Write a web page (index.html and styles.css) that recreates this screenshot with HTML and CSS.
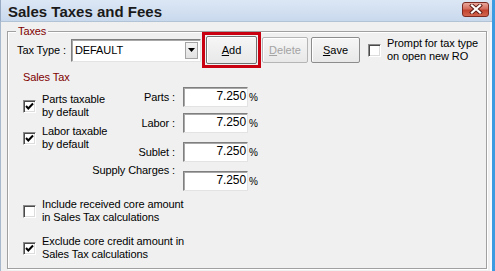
FILE: index.html
```html
<!DOCTYPE html>
<html lang="en">
<head>
    <meta charset="UTF-8">
    <title>Sales Taxes and Fees</title>
    <link rel="stylesheet" href="styles.css">
</head>
<body>
    <div class="window">
        <div class="titlebar">
            <span class="title">Sales Taxes and Fees</span>
            <span class="close-btn">
                <svg width="14" height="10" viewBox="0 0 14 10">
                    <path d="M3 1.5 L11 8.5 M11 1.5 L3 8.5" stroke="#5a1a14" stroke-width="4" stroke-linecap="square"/>
                    <path d="M3 1.5 L11 8.5 M11 1.5 L3 8.5" stroke="#fff" stroke-width="2.2" stroke-linecap="square"/>
                </svg>
            </span>
        </div>
        <div class="client">
            <div class="group">
                <span class="group-title">Taxes</span>

                <div class="toolbar">
                    <span class="field-label">Tax Type :</span>
                    <div class="combo">
                        <span class="combo-value">DEFAULT</span>
                        <span class="combo-arrow">
                            <svg width="7" height="4" viewBox="0 0 7 4"><path d="M0 0 H7 L3.5 4 Z" fill="#000"/></svg>
                        </span>
                    </div>
                    <div class="highlight">
                        <button class="btn btn-add"><u>A</u>dd</button>
                    </div>
                    <button class="btn btn-delete" disabled><u>D</u>elete</button>
                    <button class="btn btn-save"><u>S</u>ave</button>
                    <label class="check-item prompt">
                        <span class="check"></span>
                        <span>Prompt for tax type<br>on open new RO</span>
                    </label>
                </div>

                <div class="section-title">Sales Tax</div>

                <div class="sales">
                    <div class="flags">
                        <label class="check-item">
                            <span class="check checked">
                                <svg width="9" height="9" viewBox="0 0 9 9"><path d="M1 4 L3.3 6.5 L8 1.5" fill="none" stroke="#000" stroke-width="2"/></svg>
                            </span>
                            <span>Parts taxable<br>by default</span>
                        </label>
                        <label class="check-item">
                            <span class="check checked">
                                <svg width="9" height="9" viewBox="0 0 9 9"><path d="M1 4 L3.3 6.5 L8 1.5" fill="none" stroke="#000" stroke-width="2"/></svg>
                            </span>
                            <span>Labor taxable<br>by default</span>
                        </label>
                    </div>

                    <div class="rates">
                        <div class="rate">
                            <span class="rate-label">Parts :</span>
                            <span class="rate-input">7.250</span>
                            <span class="pct">%</span>
                        </div>
                        <div class="rate rate-labor">
                            <span class="rate-label">Labor :</span>
                            <span class="rate-input">7.250</span>
                            <span class="pct">%</span>
                        </div>
                        <div class="rate">
                            <span class="rate-label">Sublet :</span>
                            <span class="rate-input">7.250</span>
                            <span class="pct">%</span>
                        </div>
                        <div class="rate">
                            <span class="rate-label raised">Supply Charges :</span>
                            <span class="rate-input">7.250</span>
                            <span class="pct">%</span>
                        </div>
                    </div>
                </div>

                <div class="core-options">
                    <label class="check-item">
                        <span class="check"></span>
                        <span>Include received core amount<br>in Sales Tax calculations</span>
                    </label>
                    <label class="check-item">
                        <span class="check checked">
                            <svg width="9" height="9" viewBox="0 0 9 9"><path d="M1 4 L3.3 6.5 L8 1.5" fill="none" stroke="#000" stroke-width="2"/></svg>
                        </span>
                        <span>Exclude core credit amount in<br>Sales Tax calculations</span>
                    </label>
                </div>
            </div>
        </div>
    </div>
</body>
</html>
```

FILE: styles.css
```css
* {
    box-sizing: border-box;
}

body {
    margin: 0;
    font-family: "Liberation Sans", Arial, sans-serif;
    font-size: 11px;
    line-height: 13px;
    letter-spacing: -0.1px;
    color: #000;
    background-color: #f0f0f0;
}

.window {
    width: 495px;
    height: 271px;
    display: flex;
    flex-direction: column;
    border-right: 3px solid #3d9be2;
    overflow: hidden;
}

.titlebar {
    height: 22px;
    flex: none;
    display: flex;
    align-items: center;
    justify-content: space-between;
    padding: 0 3px 0 7px;
    background: linear-gradient(#dce7f5, #c9d9ed);
    border-left: 1px solid #98abc3;
    border-bottom: 1px solid #b3c3d6;
}

.title {
    font-size: 15px;
    font-weight: bold;
    letter-spacing: 0;
    color: #1a1a1a;
    margin-top: 1px;
}

.close-btn {
    width: 27px;
    height: 15px;
    margin-top: -3px;
    display: flex;
    align-items: center;
    justify-content: center;
    border: 1px solid #7d2a22;
    border-radius: 3px;
    background: linear-gradient(#e9a89c, #d36b5c 45%, #c2432f 55%, #d26650);
}

.client {
    flex: 1;
    padding: 9px 3px 0 6px;
    border-left: 1px solid #a8b9cd;
    border-right: 2px solid #f7f9fc;
}

.group {
    position: relative;
    height: 238px;
    padding-left: 9px;
    border: 1px solid #a0a0a0;
    box-shadow: inset 1px 1px 0 #fff, 1px 1px 0 #fff;
}

.group-title {
    position: absolute;
    top: -7px;
    left: 8px;
    padding: 0 2px;
    color: #800000;
    background-color: #f0f0f0;
}

/* tax type row */
.toolbar {
    height: 36px;
    display: flex;
    align-items: center;
}

.field-label {
    width: 54px;
}

.combo {
    width: 130px;
    height: 23px;
    display: flex;
    align-items: center;
    justify-content: space-between;
    background-color: #fff;
    border: 1px solid;
    border-color: #7f7f7f #e3e3e3 #e3e3e3 #7f7f7f;
    box-shadow: inset 1px 1px 0 #a8a8a8;
    padding: 2px 2px 2px 3px;
}

.combo-arrow {
    width: 13px;
    height: 17px;
    display: flex;
    align-items: center;
    justify-content: center;
    background: linear-gradient(#f4f4f4, #e2e2e2);
    border: 1px solid #a5a5a5;
}

.highlight {
    margin-left: 1px;
    width: 59px;
    height: 36px;
    padding: 1px;
    border: 3px solid #c80010;
}

.btn {
    height: 26px;
    padding: 0;
    font-family: inherit;
    font-size: 11px;
    color: #000;
    border: 1px solid #8c8c8c;
    border-radius: 2px;
    background: linear-gradient(#f6f6f6, #e8e8e8);
    box-shadow: inset 1px 1px 0 #fff;
}

.btn-add {
    width: 51px;
    height: 28px;
    border-color: #707070;
}

.btn-delete {
    width: 46px;
    margin-left: 1px;
    color: #a3a3a3;
    border-color: #b5b5b5;
}

.btn-save {
    width: 49px;
    margin-left: 3px;
}

.check-item {
    display: flex;
    align-items: center;
}

.check-item .check {
    margin-right: 6px;
}

.prompt {
    margin-left: 8px;
}

.check {
    width: 13px;
    height: 13px;
    flex: none;
    display: flex;
    align-items: center;
    justify-content: center;
    background-color: #fff;
    border: 1px solid;
    border-color: #8a8a8a #fff #fff #8a8a8a;
    box-shadow: inset 1px 1px 0 #4a4a4a, inset -1px -1px 0 #dcdcdc;
}

/* sales tax section */
.section-title {
    margin-top: 3px;
    padding-left: 6px;
    color: #800000;
}

.sales {
    display: flex;
    margin-top: 3px;
    padding-left: 6px;
}

.flags {
    width: 87px;
    padding-top: 6px;
    display: flex;
    flex-direction: column;
    gap: 6px;
}

.rates {
    display: flex;
    flex-direction: column;
}

.rate {
    display: flex;
    align-items: center;
    height: 20px;
    margin-top: 9px;
}

.rate:first-child {
    margin-top: 0;
}

.rate.rate-labor {
    margin-top: 6px;
}

.rate-label {
    width: 65px;
    display: flex;
    justify-content: flex-end;
    white-space: nowrap;
}

.rate-label.raised {
    align-self: flex-start;
    margin-top: -7px;
}

.rate-input {
    width: 65px;
    height: 20px;
    margin-left: 8px;
    padding: 2px 1px 0 0;
    text-align: right;
    font-size: 12px;
    background-color: #fff;
    border: 1px solid;
    border-color: #7f7f7f #e3e3e3 #e3e3e3 #7f7f7f;
    box-shadow: inset 1px 1px 0 #a8a8a8;
}

.pct {
    margin-left: 1px;
    font-size: 10px;
}

.core-options {
    display: flex;
    flex-direction: column;
    gap: 11px;
    margin-top: 7px;
    padding-left: 6px;
}
```
